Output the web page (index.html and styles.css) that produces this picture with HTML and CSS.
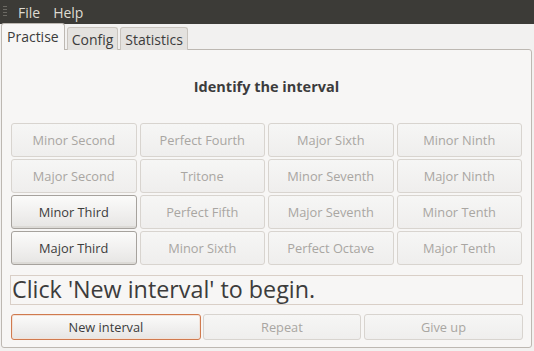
FILE: index.html
```html
<!DOCTYPE html>
<html>
<head>
<meta charset="utf-8">
<link rel="stylesheet" href="styles.css">
</head>
<body>
<div class="window">
  <div class="menubar">
    <span class="grip"></span>
    <span class="menu-item">File</span>
    <span class="menu-item">Help</span>
  </div>
  <div class="tabs">
    <div class="tab active">Practise</div>
    <div class="tab">Config</div>
    <div class="tab">Statistics</div>
  </div>
  <div class="panel">
    <div class="title">Identify the interval</div>
    <div class="grid">
      <button class="btn" disabled>Minor Second</button>
      <button class="btn" disabled>Perfect Fourth</button>
      <button class="btn" disabled>Major Sixth</button>
      <button class="btn" disabled>Minor Ninth</button>
      <button class="btn" disabled>Major Second</button>
      <button class="btn" disabled>Tritone</button>
      <button class="btn" disabled>Minor Seventh</button>
      <button class="btn" disabled>Major Ninth</button>
      <button class="btn enabled">Minor Third</button>
      <button class="btn" disabled>Perfect Fifth</button>
      <button class="btn" disabled>Major Seventh</button>
      <button class="btn" disabled>Minor Tenth</button>
      <button class="btn enabled">Major Third</button>
      <button class="btn" disabled>Minor Sixth</button>
      <button class="btn" disabled>Perfect Octave</button>
      <button class="btn" disabled>Major Tenth</button>
    </div>
    <div class="message">Click 'New interval' to begin.</div>
    <div class="actions">
      <button class="btn action focus">New interval</button>
      <button class="btn action repeat" disabled>Repeat</button>
      <button class="btn action giveup" disabled>Give up</button>
    </div>
  </div>
</div>
</body>
</html>
```
FILE: styles.css
```css
html, body {
  margin: 0;
  padding: 0;
}
body {
  width: 534px;
  height: 351px;
  background: #f2f1f0;
  font-family: "Open Sans", "Noto Sans", sans-serif;
  overflow: hidden;
}
.window {
  width: 534px;
  height: 351px;
  display: flex;
  flex-direction: column;
}
.menubar {
  height: 24px;
  background: #3c3b37;
  display: flex;
  align-items: center;
  color: #dfdbd2;
  font-size: 14px;
}
.grip {
  width: 4px;
  height: 12px;
  margin-left: 3px;
  margin-right: 11px;
  background: repeating-linear-gradient(to bottom, #6c6a64 0 1px, transparent 1px 3px);
}
.menu-item {
  margin-right: 13px;
}
.tabs {
  height: 26px;
  display: flex;
  align-items: flex-end;
  padding-left: 1px;
  gap: 2px;
  position: relative;
  z-index: 1;
  margin-bottom: -1px;
}
.tab {
  height: 23px;
  padding: 0 4px;
  display: flex;
  align-items: center;
  font-size: 14px;
  color: #3c3c3c;
  background: #e4e2df;
  border: 1px solid #c9c4be;
  border-bottom: none;
  border-radius: 3px 3px 0 0;
  box-sizing: border-box;
}
.tab.active {
  height: 27px;
  background: #f7f6f5;
  border-color: #bdb8b2;
  padding: 0 5px 1px 5px;
}
.panel {
  margin: 0 2px 3px 1px;
  flex: 1;
  background: #f7f6f5;
  border: 1px solid #bdb8b2;
  border-radius: 0 3px 3px 3px;
  padding: 0 8px 0 8px;
  display: flex;
  flex-direction: column;
}
.title {
  text-align: center;
  font-weight: bold;
  font-size: 14.5px;
  color: #3c3c3c;
  height: 73px;
  line-height: 73px;
}
.grid {
  display: grid;
  grid-template-columns: repeat(4, 1fr);
  grid-auto-rows: 34px;
  column-gap: 3px;
  row-gap: 2px;
  padding: 0 1px 0 1px;
}
.btn {
  font-family: inherit;
  font-size: 12.8px;
  color: #3c3c3c;
  border: 1px solid #a6a29d;
  border-radius: 3px;
  background: linear-gradient(to bottom, #fbfbfa 0%, #efeeed 60%, #e6e5e3 100%);
  padding: 0;
  margin: 0;
  box-shadow: inset 0 -3px 0 -1px #dcdad6;
}
.btn:disabled {
  color: #a9a6a2;
  border-color: #d8d4cf;
  background: linear-gradient(to bottom, #f6f6f5 0%, #efeeed 100%);
  box-shadow: none;
}
.message {
  margin-top: 10px;
  height: 30px;
  box-sizing: border-box;
  border: 1px solid #d9cfc7;
  background: #f7f6f5;
  font-size: 23.3px;
  color: #3c3c3c;
  padding-left: 1px;
  line-height: 27px;
  white-space: nowrap;
}
.actions {
  margin-top: 9px;
  display: flex;
  gap: 2px;
  height: 26px;
  padding-left: 1px;
}
.action {
  height: 26px;
}
.action.focus {
  width: 191px;
  border-color: #d07a4e;
  box-shadow: inset 0 0 0 1px #f2e2d8;
}
.action.repeat {
  width: 159px;
}
.action.giveup {
  width: 160px;
  margin-left: 1px;
}
```
